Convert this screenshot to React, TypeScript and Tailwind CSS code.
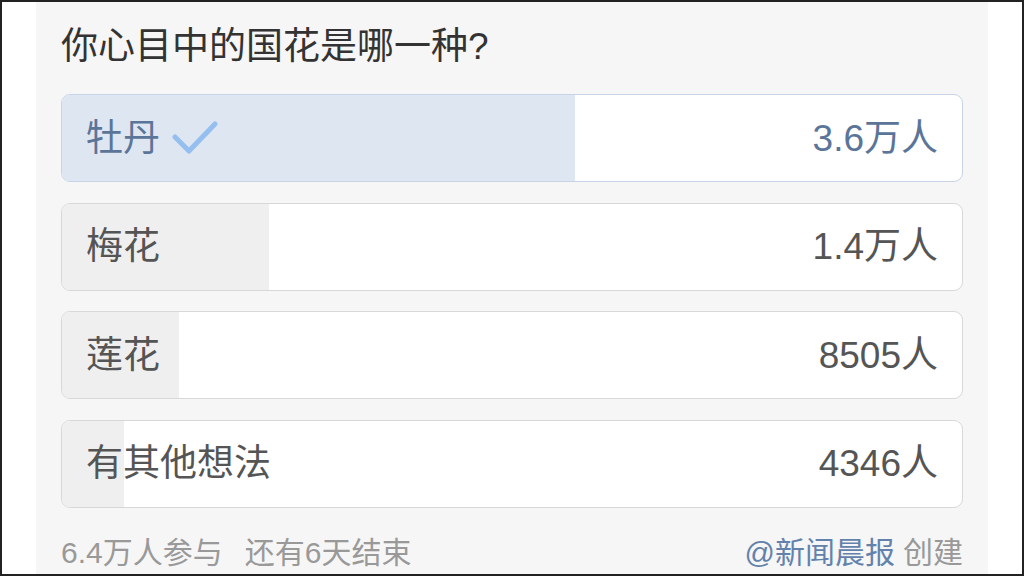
import React from 'react';

interface PollOption {
  label: string;
  count: string;
  percent: number;
  selected?: boolean;
}

const options: PollOption[] = [
  { label: '牡丹', count: '3.6万人', percent: 57, selected: true },
  { label: '梅花', count: '1.4万人', percent: 23 },
  { label: '莲花', count: '8505人', percent: 13 },
  { label: '有其他想法', count: '4346人', percent: 6.9 },
];

const font = { fontFamily: '"Liberation Sans", "Noto Sans CJK SC", sans-serif' };

const CheckMark = () => (
  <svg width="46" height="36" viewBox="0 0 46 36" className="ml-[12px]">
    <path d="M3 17 L17 31 L43 4" fill="none" stroke="#94bfee" strokeWidth={5} strokeLinecap="round" strokeLinejoin="round" />
  </svg>
);

const OptionRow: React.FC<{ option: PollOption }> = ({ option }) => (
  <div
    className={`relative h-[88px] rounded-[9px] border overflow-hidden bg-white ${
      option.selected ? 'border-[#c6d4e5]' : 'border-[#d8d8d8]'
    }`}
  >
    <div
      className={`absolute left-0 top-0 bottom-0 ${option.selected ? 'bg-[#dde6f1]' : 'bg-[#efefef]'}`}
      style={{ width: `${option.percent}%` }}
    />
    <div className="relative flex items-center justify-between h-full pl-[24px] pr-[24px] text-[37px] leading-none">
      <div className={`flex items-center ${option.selected ? 'text-[#5b7599]' : 'text-[#555555]'}`}>
        <span>{option.label}</span>
        {option.selected && <CheckMark />}
      </div>
      <span className={option.selected ? 'text-[#5b7599]' : 'text-[#555555]'}>{option.count}</span>
    </div>
  </div>
);

export default function App() {
  return (
    <div className="w-[1024px] h-[576px] border-2 border-[#222222] bg-white flex overflow-hidden" style={font}>
      <div className="ml-[34px] w-[952px] h-full bg-[#f6f6f6] px-[25px]">
        <div className="pt-[25px] h-[92px] text-[37px] leading-[40px] text-[#333333]">你心目中的国花是哪一种?</div>
        <div className="flex flex-col gap-[20.67px]">
          {options.map((o) => (
            <OptionRow key={o.label} option={o} />
          ))}
        </div>
        <div className="mt-[25px] flex items-center justify-between text-[30px] leading-[40px] text-[#999999]">
          <div>
            <span>6.4万人参与</span>
            <span className="ml-[22px]">还有6天结束</span>
          </div>
          <div>
            <span className="text-[#6382ab]">@新闻晨报</span>
            <span className="ml-[8px]">创建</span>
          </div>
        </div>
      </div>
    </div>
  );
}
